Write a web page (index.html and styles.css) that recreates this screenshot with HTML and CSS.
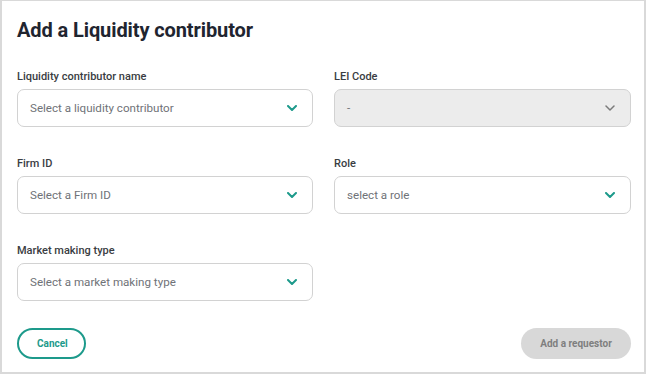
FILE: index.html
```html
<!DOCTYPE html>
<html lang="en">
<head>
  <meta charset="UTF-8" />
  <title>Add a Liquidity contributor</title>
  <link rel="stylesheet" href="styles.css">
</head>
<body>
  <div class="modal">
    <h1 class="modal-title">Add a Liquidity contributor</h1>

    <div class="form-grid">
      <div class="field">
        <label class="field-label">Liquidity contributor name</label>
        <div class="select">
          <span class="select-text">Select a liquidity contributor</span>
          <svg class="chevron" viewBox="0 0 10 6"><path d="M1 1l4 4 4-4" /></svg>
        </div>
      </div>
      <div class="field">
        <label class="field-label">LEI Code</label>
        <div class="select disabled">
          <span class="select-text">-</span>
          <svg class="chevron" viewBox="0 0 10 6"><path d="M1 1l4 4 4-4" /></svg>
        </div>
      </div>

      <div class="field">
        <label class="field-label">Firm ID</label>
        <div class="select">
          <span class="select-text">Select a Firm ID</span>
          <svg class="chevron" viewBox="0 0 10 6"><path d="M1 1l4 4 4-4" /></svg>
        </div>
      </div>
      <div class="field">
        <label class="field-label">Role</label>
        <div class="select">
          <span class="select-text">select a role</span>
          <svg class="chevron" viewBox="0 0 10 6"><path d="M1 1l4 4 4-4" /></svg>
        </div>
      </div>

      <div class="field">
        <label class="field-label">Market making type</label>
        <div class="select">
          <span class="select-text">Select a market making type</span>
          <svg class="chevron" viewBox="0 0 10 6"><path d="M1 1l4 4 4-4" /></svg>
        </div>
      </div>
    </div>

    <div class="actions">
      <button class="btn btn-outline">Cancel</button>
      <button class="btn btn-disabled" disabled>Add a requestor</button>
    </div>
  </div>
</body>
</html>
```

FILE: styles.css
```css
:root {
  --teal: #1d9a8b;
  --text: #1f2530;
  --label: #3a3d42;
  --muted: #6f7277;
  --line: #d2d2d2;
}

* {
  margin: 0;
  padding: 0;
  box-sizing: border-box;
  font-family: 'Roboto', 'Liberation Sans', sans-serif;
}

body {
  background: #ffffff;
  width: 650px;
  height: 375px;
}

.modal {
  width: 646px;
  height: 374px;
  border: 2px solid #d9d9d9;
  border-top-width: 1px;
  padding: 18px 13px 0 15px;
  background: #fff;
}

.modal-title {
  font-size: 20px;
  line-height: 22px;
  font-weight: 700;
  color: var(--text);
  letter-spacing: -0.1px;
}

.form-grid {
  margin-top: 29px;
  display: grid;
  grid-template-columns: 296px 297px;
  column-gap: 21px;
  row-gap: 30px;
}

.field-label {
  display: block;
  font-size: 11px;
  line-height: 14px;
  font-weight: 500;
  color: var(--label);
  margin-bottom: 5px;
}

.select {
  height: 38px;
  border: 1px solid var(--line);
  border-radius: 7px;
  display: flex;
  align-items: center;
  justify-content: space-between;
  padding: 0 15px 0 12px;
  background: #fff;
}

.select-text {
  font-size: 11.6px;
  color: var(--muted);
}

.chevron {
  width: 10px;
  height: 6px;
  fill: none;
  stroke: var(--teal);
  stroke-width: 2;
  stroke-linecap: round;
  stroke-linejoin: round;
}

.select.disabled {
  background: #ececec;
}

.select.disabled .chevron {
  stroke: #7b7b7b;
  stroke-width: 1.5;
}

.actions {
  margin-top: 27px;
  display: flex;
  justify-content: space-between;
}

.btn {
  height: 31px;
  border-radius: 16px;
  font-size: 10px;
  font-weight: 700;
  padding: 0 18px;
}

.btn-outline {
  width: 69px;
  background: #fff;
  border: 2px solid var(--teal);
  color: var(--teal);
}

.btn-disabled {
  width: 110px;
  border: none;
  background: #d8d8d8;
  color: #7f7f7f;
}
```
